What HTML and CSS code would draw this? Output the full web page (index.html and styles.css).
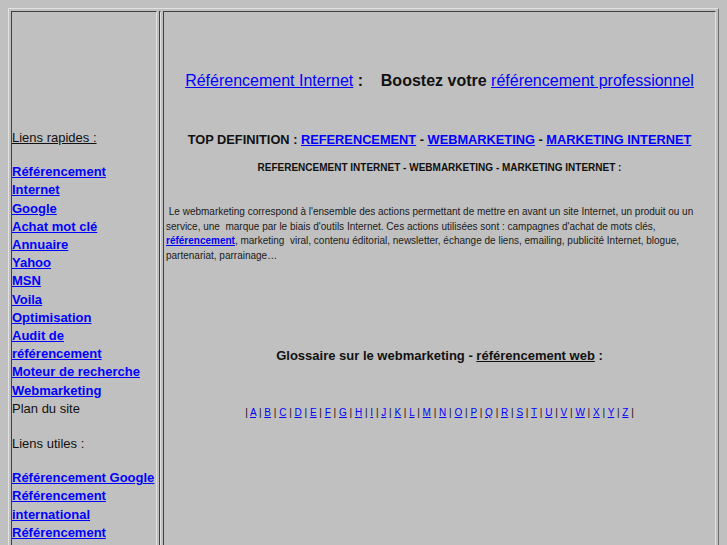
FILE: index.html
```html
<!DOCTYPE html>
<html lang="fr">
<head>
<meta charset="utf-8">
<title>Référencement Internet</title>
<link rel="stylesheet" href="styles.css">
</head>
<body>
<div class="frame">
  <div class="cell side">
    <div class="line"><span class="ul">Liens rapides :</span></div>
    <div class="line blank first"></div>
    <a class="nav" href="#">Référencement Internet</a>
    <a class="nav" href="#">Google</a>
    <a class="nav" href="#">Achat mot clé</a>
    <a class="nav" href="#">Annuaire</a>
    <a class="nav" href="#">Yahoo</a>
    <a class="nav" href="#">MSN</a>
    <a class="nav" href="#">Voila</a>
    <a class="nav" href="#">Optimisation</a>
    <a class="nav" href="#">Audit de référencement</a>
    <a class="nav" href="#">Moteur de recherche</a>
    <a class="nav" href="#">Webmarketing</a>
    <div class="line">Plan du site</div>
    <div class="line blank"></div>
    <div class="line">Liens utiles :</div>
    <div class="line blank"></div>
    <a class="nav" href="#">Référencement Google</a>
    <a class="nav" href="#">Référencement international</a>
    <a class="nav" href="#">Référencement Internet</a>
    <a class="nav" href="#">Référencement Yahoo</a>
    <a class="nav" href="#">Référencement MSN</a>
  </div>
  <div class="cell spacer"></div>
  <div class="cell main">
    <h1 class="head"><a href="#">Référencement Internet</a><b>&nbsp;:&nbsp;&nbsp;&nbsp; Boostez votre</b> <a href="#">référencement professionnel</a></h1>
    <h2 class="top">TOP DEFINITION : <a href="#">REFERENCEMENT</a> - <a href="#">WEBMARKETING</a> - <a href="#">MARKETING INTERNET</a></h2>
    <h3 class="sub">REFERENCEMENT INTERNET - WEBMARKETING - MARKETING INTERNET :</h3>
    <p class="para">&nbsp;Le webmarketing correspond à l'ensemble des actions permettant de mettre en avant un site Internet, un produit ou un<br>service, une&nbsp; marque par le biais d'outils Internet. Ces actions utilisées sont : campagnes d'achat de mots clés,<br><a href="#"><b>référencement</b></a>, marketing&nbsp; viral, contenu éditorial, newsletter, échange de liens, emailing, publicité Internet, blogue,<br>partenariat, parrainage…</p>
    <h2 class="gloss">Glossaire sur le webmarketing - <span class="ul">référencement web</span> :</h2>
    <p class="alpha">| <a href="#">A</a> | <a href="#">B</a> | <a href="#">C</a> | <a href="#">D</a> | <a href="#">E</a> | <a href="#">F</a> | <a href="#">G</a> | <a href="#">H</a> | <a href="#">I</a> | <a href="#">J</a> | <a href="#">K</a> | <a href="#">L</a> | <a href="#">M</a> | <a href="#">N</a> | <a href="#">O</a> | <a href="#">P</a> | <a href="#">Q</a> | <a href="#">R</a> | <a href="#">S</a> | <a href="#">T</a> | <a href="#">U</a> | <a href="#">V</a> | <a href="#">W</a> | <a href="#">X</a> | <a href="#">Y</a> | <a href="#">Z</a> |</p>
  </div>
</div>
</body>
</html>
```

FILE: styles.css
```css
html, body {
  background: #c0c0c0;
}
body {
  margin: 8px;
  font-family: "Liberation Sans", Arial, sans-serif;
  color: #111;
}
a {
  color: #0000ff;
  text-decoration: underline;
}
.ul {
  text-decoration: underline;
}
.frame {
  display: flex;
  align-items: stretch;
  gap: 2px;
  padding: 2px;
  border: 1px solid;
  border-color: #e2e2e2 #6e6e6e #6e6e6e #e2e2e2;
}
.cell {
  border: 1px solid;
  border-color: #404040 #e2e2e2 #e2e2e2 #404040;
}
.side {
  width: 144px;
  flex: none;
  padding-top: 117px;
  padding-bottom: 20px;
  font-size: 13px;
  line-height: 18.2px;
}
.line {
  height: 18.2px;
}
.line.blank {
  height: 16.5px;
}
.line.first {
  height: 16px;
}
.nav {
  display: block;
  font-weight: bold;
}
.spacer {
  width: 0;
  flex: none;
}
.main {
  flex: 1;
  padding: 0 2px;
  text-align: center;
}
.head {
  margin: 60px 0 0;
  font-size: 16px;
  font-weight: normal;
  line-height: 18px;
}
.head b {
  color: #111;
}
.top {
  margin: 42px 0 0;
  font-size: 12.8px;
  font-weight: bold;
  line-height: 16px;
}
.sub {
  margin: 13px 0 0;
  font-size: 10px;
  font-weight: bold;
  line-height: 14px;
}
.para {
  margin: 30px 0 0;
  text-align: left;
  font-size: 10px;
  line-height: 14.7px;
  color: #1a1a1a;
}
.gloss {
  margin: 84px 0 0;
  font-size: 13px;
  font-weight: bold;
  line-height: 16px;
}
.alpha {
  margin: 42px 0 0;
  font-size: 10px;
  line-height: 14px;
}
```
